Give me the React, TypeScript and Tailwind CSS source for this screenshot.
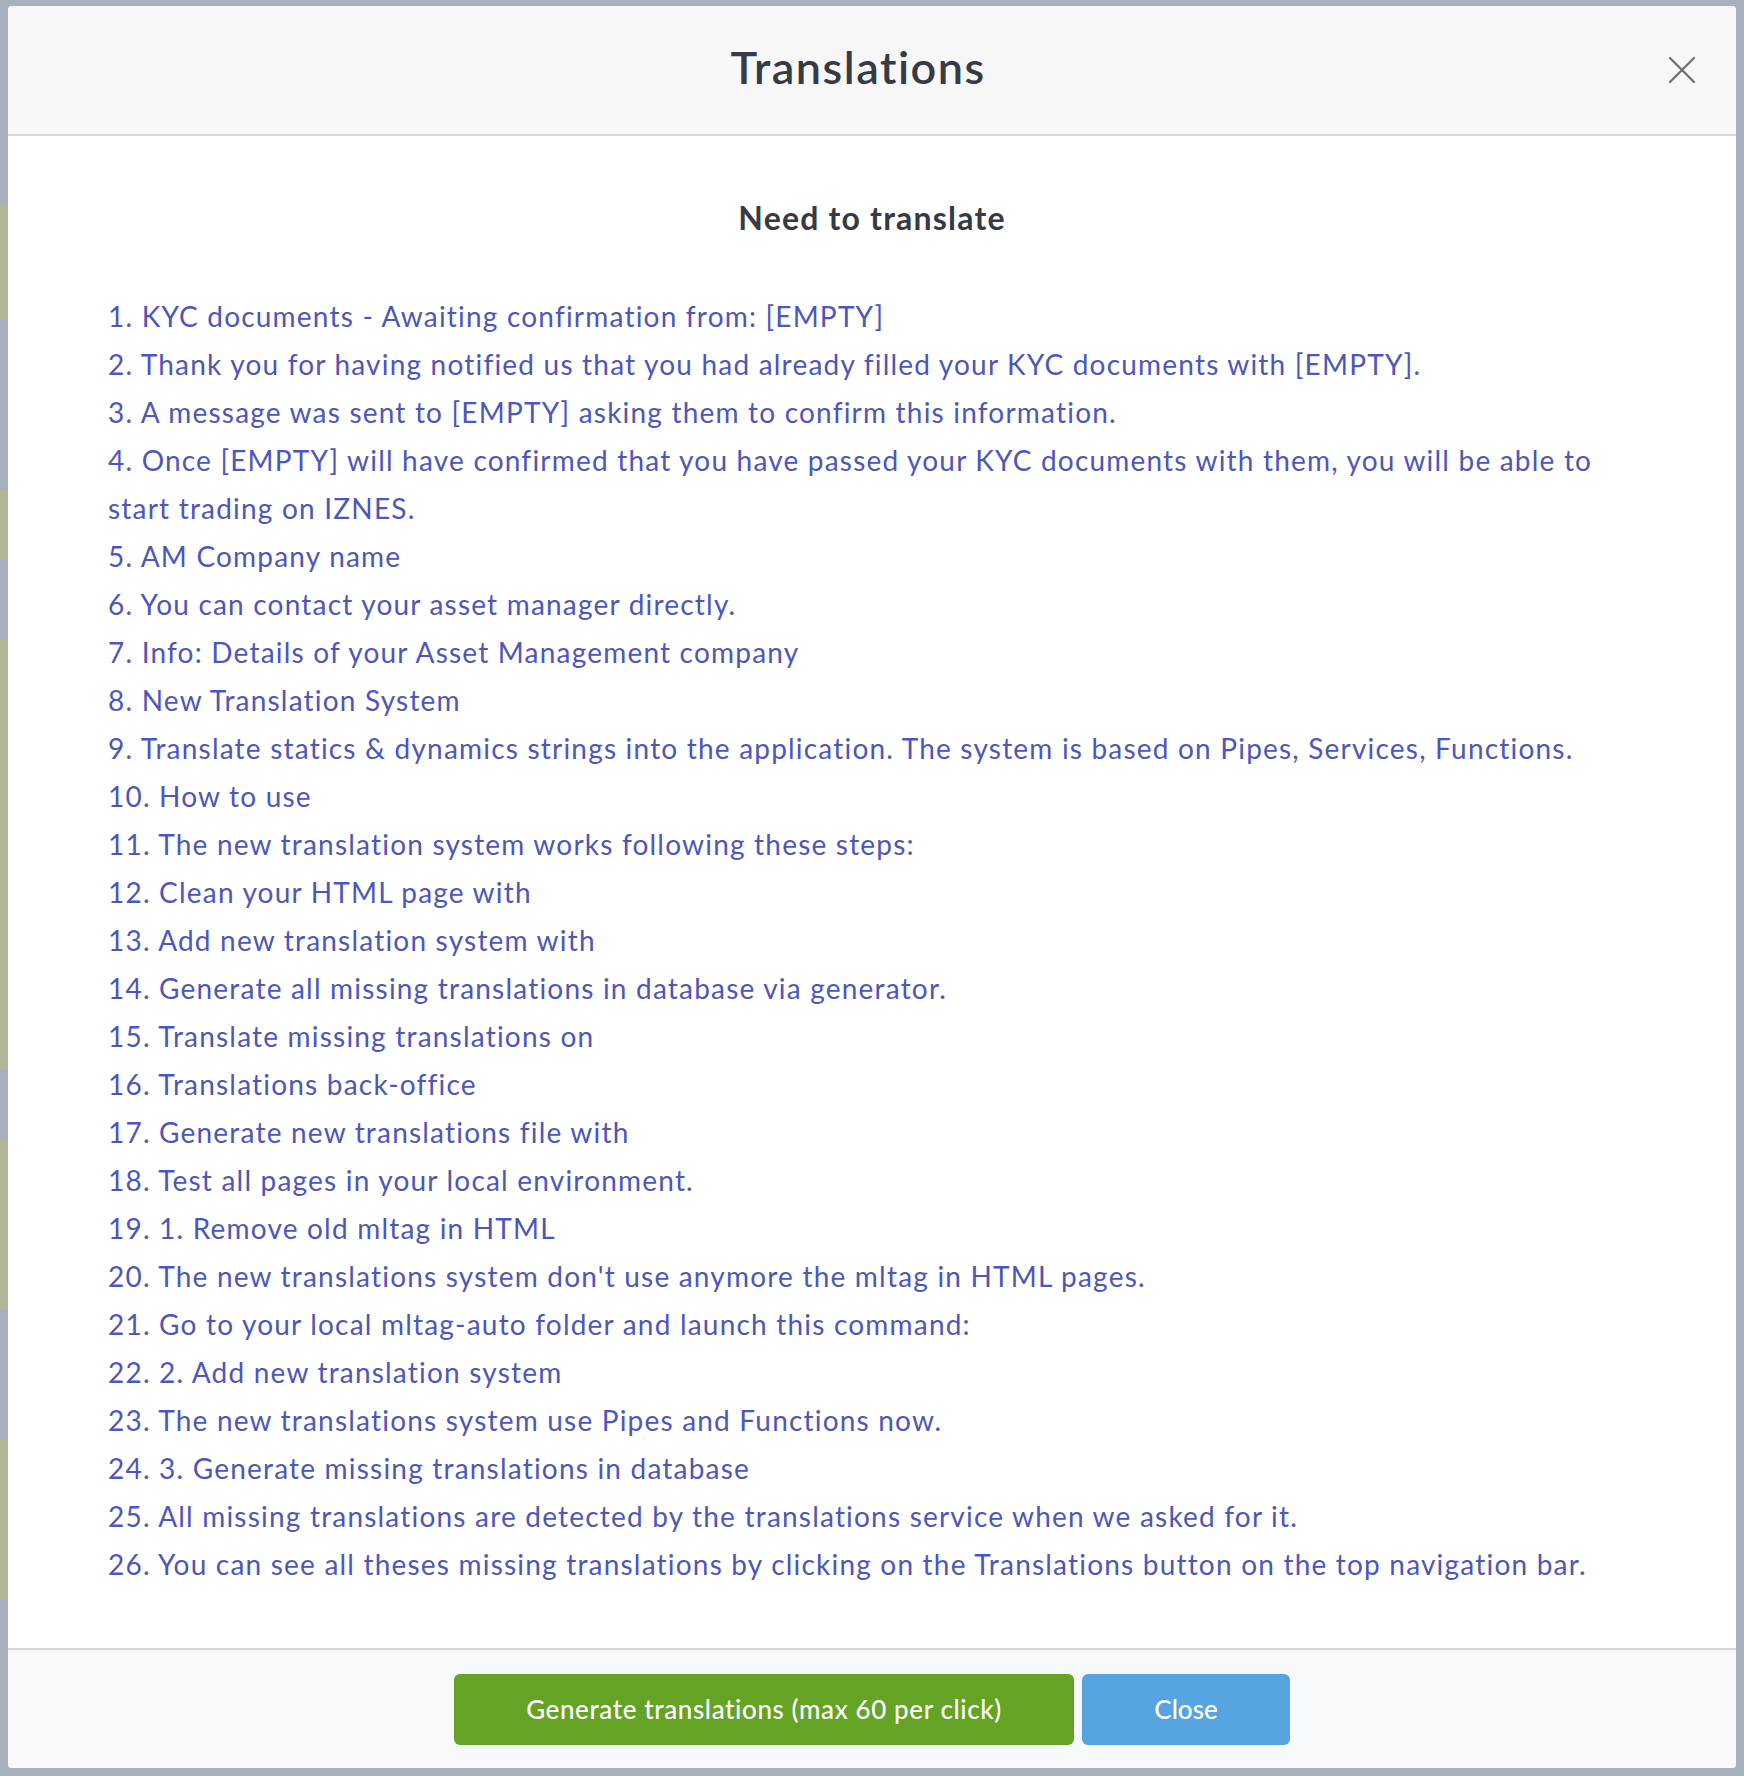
import React from "react";

// Strings waiting for a translation
const pending = [
  "KYC documents - Awaiting confirmation from: [EMPTY]",
  "Thank you for having notified us that you had already filled your KYC documents with [EMPTY].",
  "A message was sent to [EMPTY] asking them to confirm this information.",
  "Once [EMPTY] will have confirmed that you have passed your KYC documents with them, you will be able to start trading on IZNES.",
  "AM Company name",
  "You can contact your asset manager directly.",
  "Info: Details of your Asset Management company",
  "New Translation System",
  "Translate statics & dynamics strings into the application. The system is based on Pipes, Services, Functions.",
  "How to use",
  "The new translation system works following these steps:",
  "Clean your HTML page with",
  "Add new translation system with",
  "Generate all missing translations in database via generator.",
  "Translate missing translations on",
  "Translations back-office",
  "Generate new translations file with",
  "Test all pages in your local environment.",
  "1. Remove old mltag in HTML",
  "The new translations system don't use anymore the mltag in HTML pages.",
  "Go to your local mltag-auto folder and launch this command:",
  "2. Add new translation system",
  "The new translations system use Pipes and Functions now.",
  "3. Generate missing translations in database",
  "All missing translations are detected by the translations service when we asked for it.",
  "You can see all theses missing translations by clicking on the Translations button on the top navigation bar.",
];

// Bits of the page peeking out behind the modal
const BackdropStrip = () => (
  <div className="w-[8px] flex flex-col">
    <div className="h-[205px] bg-[#a9b0bd]" />
    <div className="h-[115px] bg-[#b2b797]" />
    <div className="h-[170px] bg-[#a9b0bd]" />
    <div className="h-[70px] bg-[#b2b797]" />
    <div className="h-[80px] bg-[#a9b0bd]" />
    <div className="h-[430px] bg-[#b2b797]" />
    <div className="h-[70px] bg-[#a9b0bd]" />
    <div className="h-[170px] bg-[#b2b797]" />
    <div className="h-[130px] bg-[#a9b0bd]" />
    <div className="h-[160px] bg-[#b2b797]" />
    <div className="flex-1 bg-[#a9b0bd]" />
  </div>
);

const CloseIcon = () => (
  <svg width="28" height="28" viewBox="0 0 28 28" fill="none">
    <path d="M2 2L26 26M26 2L2 26" stroke="#6d6d6d" strokeWidth="2.2" strokeLinecap="round" />
  </svg>
);

const App = () => {
  return (
    <div
      className="w-[1744px] h-[1776px] bg-[#a9b0bd] flex"
      style={{ fontFamily: "Lato, 'Noto Sans', sans-serif" }}
    >
      <BackdropStrip />

      <div className="flex-1 pt-[6px] pb-[8px] flex flex-col">
        <div className="flex-1 bg-white rounded-[4px] flex flex-col overflow-hidden">
          {/* Header */}
          <div className="relative h-[130px] bg-[#f7f7f7] border-b-2 border-[#d6d6d6] flex items-center justify-center pr-[28px] pb-[4px]">
            <h1 className="text-[45px] font-semibold text-[#363a45] tracking-[1.5px]">Translations</h1>
            <button className="absolute right-[40px] top-[50px]">
              <CloseIcon />
            </button>
          </div>

          {/* Body */}
          <div className="flex-1 px-[100px] pt-[62px]">
            <h2 className="text-center text-[32px] font-bold text-[#363a45] leading-[40px] tracking-[1.2px]">
              Need to translate
            </h2>
            <div className="mt-[54px] text-[28px] leading-[48px] text-[#4d56bb] tracking-[1.2px]">
              {pending.map((item, index) => (
                <p key={index}>
                  {index + 1}. {item}
                </p>
              ))}
            </div>
          </div>

          {/* Footer */}
          <div className="h-[120px] bg-[#f8f9fa] border-t-2 border-[#d6d6d6] flex items-center justify-center gap-[8px]">
            <button className="h-[71px] w-[620px] rounded-[6px] bg-[#65a324] text-white text-[26px] font-medium tracking-[0.6px]">
              Generate translations (max 60 per click)
            </button>
            <button className="h-[71px] w-[208px] rounded-[6px] bg-[#57a5e0] text-white text-[26px] font-medium">
              Close
            </button>
          </div>
        </div>
      </div>

      <div className="w-[8px] bg-[#a9b0bd]" />
    </div>
  );
};

export default App;
